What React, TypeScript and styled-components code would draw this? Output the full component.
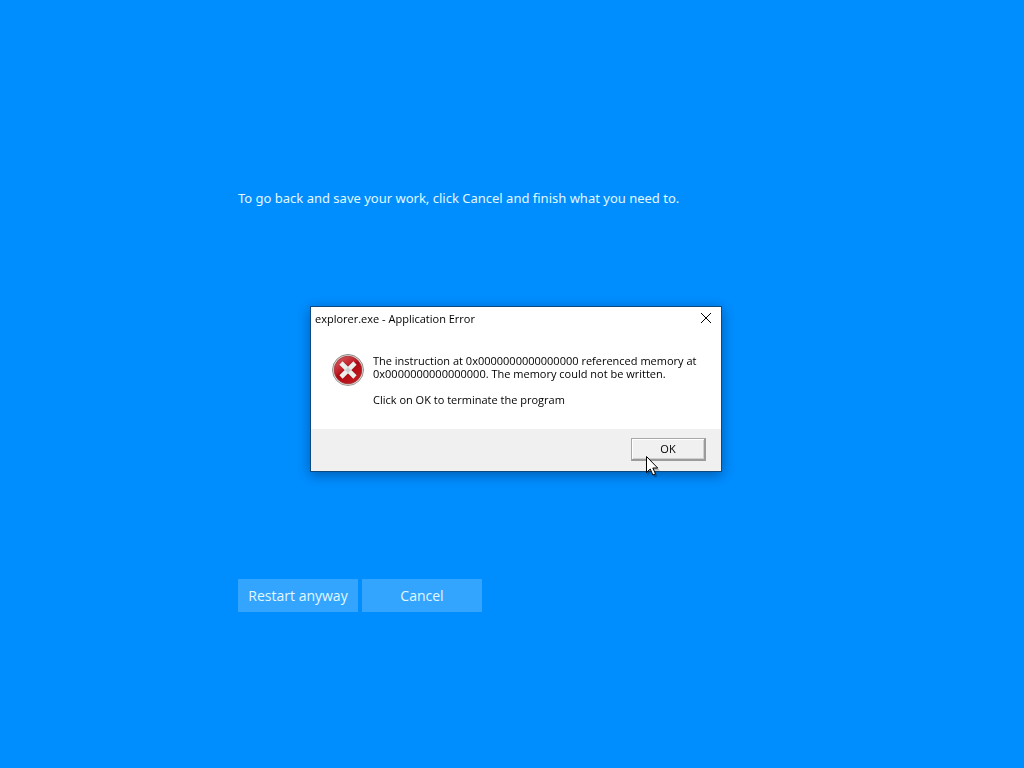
import React from "react";
import styled, { createGlobalStyle } from "styled-components";

const GlobalStyle = createGlobalStyle`
  * { box-sizing: border-box; }
  body {
    margin: 0;
    background: #008eff;
    font-family: "Open Sans", "Noto Sans", sans-serif;
  }
`;

const Screen = styled.main`
  min-height: 100vh;
  display: flex;
  flex-direction: column;
  align-items: center;
  justify-content: center;
  padding-top: 32px;
`;

const Content = styled.section`
  width: 100%;
  max-width: 548px;
  min-height: 424px;
  display: flex;
  flex-direction: column;
  justify-content: space-between;
`;

const Hint = styled.p`
  margin: 0;
  color: #e2f8ff;
  font-family: "Noto Sans", sans-serif;
  font-size: 13px;
  line-height: 20px;
`;

const Actions = styled.div`
  display: flex;
  gap: 4px;
`;

const ActionButton = styled.button`
  width: 120px;
  height: 33px;
  padding: 0;
  border: 0;
  background: #33a5ff;
  color: #e2f8ff;
  font-family: "Open Sans", sans-serif;
  font-size: 14px;
  line-height: 20px;
  white-space: nowrap;
`;

const Overlay = styled.div`
  position: fixed;
  inset: 0;
  display: flex;
  align-items: center;
  justify-content: center;
  padding: 10px 0 0 8px;
`;

const Dialog = styled.div`
  position: relative;
  width: 412px;
  max-width: 100%;
  border: 1px solid #0c4a80;
  background: #fff;
  color: #000;
  box-shadow: 0 3px 12px rgba(0, 30, 80, 0.45);
`;

const TitleBar = styled.header`
  height: 24px;
  display: flex;
  align-items: center;
  justify-content: space-between;
  padding: 0 8px 0 4px;
`;

const Title = styled.h1`
  margin: 0;
  font-size: 11px;
  font-weight: 400;
  line-height: 16px;
`;

const CloseButton = styled.button`
  display: flex;
  align-items: flex-start;
  justify-content: center;
  width: 14px;
  height: 14px;
  padding: 0;
  border: 0;
  background: transparent;
`;

const Body = styled.div`
  display: flex;
  gap: 7px;
  min-height: 98px;
  padding: 22px 20px 0 21px;
`;

const Message = styled.div`
  padding-top: 1px;
  font-size: 11px;
  line-height: 13px;
  white-space: nowrap;
`;

const Paragraph = styled.p`
  margin: 0 0 13px;
`;

const Footer = styled.footer`
  height: 42px;
  display: flex;
  align-items: center;
  justify-content: flex-end;
  padding: 0 15px 1px 0;
  background: #f0f0f0;
`;

const OkButton = styled.button`
  width: 75px;
  height: 23px;
  padding: 0;
  border: solid;
  border-width: 1px 2px 2px 1px;
  border-color: #a8a8a8 #9b9b9b #9b9b9b #a8a8a8;
  background: #f0f0f0;
  color: #000;
  font-family: "Open Sans", sans-serif;
  font-size: 11px;
  line-height: 16px;
  box-shadow: inset 1px 1px 0 #fff, inset -1px -1px 0 #cfcfcf;
`;

const Pointer = styled.svg`
  position: absolute;
  right: 60px;
  bottom: -8px;
  pointer-events: none;
`;

const ErrorIcon = () => (
  <svg width="34" height="34" viewBox="0 0 34 34" aria-hidden="true">
    <defs>
      <linearGradient id="rim" x1="0" y1="0" x2="0" y2="1">
        <stop offset="0" stopColor="#8d8583" />
        <stop offset="1" stopColor="#a39a96" />
      </linearGradient>
      <linearGradient id="red" x1="0" y1="0" x2="0.7" y2="1">
        <stop offset="0" stopColor="#d8686a" />
        <stop offset="0.45" stopColor="#c2202a" />
        <stop offset="0.55" stopColor="#ac0710" />
        <stop offset="1" stopColor="#c41b22" />
      </linearGradient>
    </defs>
    <circle cx="16" cy="17" r="15.5" fill="#e6dfdb" stroke="url(#rim)" />
    <circle cx="16" cy="17" r="13.8" fill="url(#red)" stroke="#9d3034" strokeWidth="0.8" />
    <path d="M9.500 10.500 22.500 23.500M22.500 10.500 9.500 23.500" stroke="#7e1015" strokeWidth="5.8" opacity="0.4" />
    <path d="M9 10 23 24M23 10 9 24" stroke="#ededeb" strokeWidth="4.6" />
    <path d="m16 14 3 3-3 3-3-3Z" fill="#c9d0d0" />
  </svg>
);

export default function App() {
  return (
    <>
      <GlobalStyle />
      <Screen>
        <Content>
          <Hint>To go back and save your work, click Cancel and finish what you need to.</Hint>
          <Actions>
            <ActionButton type="button">Restart anyway</ActionButton>
            <ActionButton type="button">Cancel</ActionButton>
          </Actions>
        </Content>
      </Screen>
      <Overlay>
        <Dialog role="alertdialog" aria-labelledby="error-title" aria-describedby="error-text">
          <TitleBar>
            <Title id="error-title">explorer.exe - Application Error</Title>
            <CloseButton type="button" aria-label="Close">
              <svg width="12" height="12" viewBox="0 0 12 12" fill="none" stroke="#000">
                <path d="m1 1 10 10M11 1 1 11" />
              </svg>
            </CloseButton>
          </TitleBar>
          <Body>
            <ErrorIcon />
            <Message id="error-text">
              <Paragraph>
                The instruction at 0x0000000000000000 referenced memory at
                <br />
                0x0000000000000000. The memory could not be written.
              </Paragraph>
              <Paragraph>Click on OK to terminate the program</Paragraph>
            </Message>
          </Body>
          <Footer>
            <OkButton type="button">OK</OkButton>
          </Footer>
          <Pointer width="16" height="24" viewBox="0 0 16 24" aria-hidden="true">
            <path d="M2.5 3.5v17l4-4 3 6 3-1.500-3-5.500h5.500Z" fill="#000" opacity="0.25" />
            <path d="M1.500 1.500v16l3.700-3.500 2.700 6 2.600-1.200-2.700-5.800h4.900Z" fill="#fff" stroke="#000" />
          </Pointer>
        </Dialog>
      </Overlay>
    </>
  );
}
